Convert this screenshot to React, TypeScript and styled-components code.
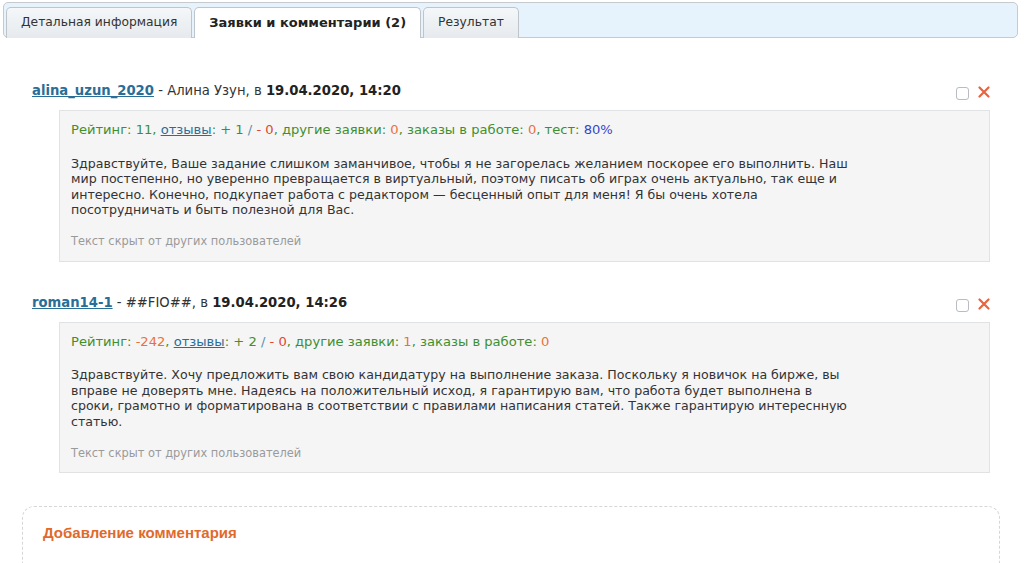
import React from "react";
import styled, { createGlobalStyle } from "styled-components";

const GlobalStyle = createGlobalStyle`
  html, body {
    margin: 0;
    padding: 0;
    background: #ffffff;
  }
  body {
    font-family: "DejaVu Sans", Verdana, sans-serif;
    font-size: 13px;
    color: #333333;
  }
`;

const Page = styled.div`
  width: 1024px;
  padding-top: 2px;
`;

const TabBar = styled.nav`
  display: flex;
  align-items: flex-end;
  gap: 2px;
  height: 34px;
  margin: 0 6px 0 3px;
  padding-left: 2px;
  background: #e7f3fc;
  border: 1px solid #c6cacf;
  border-radius: 5px;
`;

const Tab = styled.div<{ $active?: boolean }>`
  display: flex;
  align-items: center;
  flex: none;
  height: 31px;
  padding: 0 14px 2px;
  margin-bottom: -1px;
  box-sizing: border-box;
  border: 1px solid #bfc4c9;
  border-bottom: none;
  border-radius: 5px 5px 0 0;
  background: ${(p) =>
    p.$active ? "#ffffff" : "linear-gradient(#f5f7f9, #e6eaee)"};
  color: ${(p) => (p.$active ? "#222222" : "#333333")};
  font-weight: ${(p) => (p.$active ? "bold" : "normal")};
  font-size: ${(p) => (p.$active ? "13px" : "12.3px")};
`;

const List = styled.section`
  padding: 45px 34px 0 32px;
`;

const Comment = styled.article`
  & + & {
    margin-top: 33px;
  }
`;

const Header = styled.header`
  display: flex;
  align-items: center;
  height: 16px;
  line-height: 16px;
  font-size: 13.2px;
`;

const UserLink = styled.a`
  color: #2a6d96;
  font-weight: bold;
  text-decoration: underline;
`;

const Bold = styled.b`
  color: #222222;
`;

const Actions = styled.div`
  display: flex;
  align-items: center;
  gap: 9px;
  margin-left: auto;
  padding-top: 2px;
`;

const Check = styled.span`
  display: inline-block;
  width: 11px;
  height: 11px;
  margin-top: 3px;
  border: 1px solid #b9bcc0;
  border-radius: 3px;
  background: #ffffff;
`;

const Box = styled.div`
  margin: 11px 0 0 27px;
  padding: 11px 11px 11px;
  background: #f5f5f6;
  border: 1px solid #e1e2e4;
  line-height: 15.6px;
`;

const Stats = styled.div`
  color: #3f8f2f;
  font-size: 13.1px;
`;

const Tone = styled.span<{ $c: string }>`
  color: ${(p) => p.$c};
`;

const StatLink = styled.a`
  color: #2a6d96;
  text-decoration: underline;
`;

const Body = styled.p`
  margin: 18px 0 0;
  color: #333333;
  font-size: 12.6px;
`;

const Hidden = styled.div`
  margin-top: 16px;
  color: #9a9a9a;
  font-size: 11.4px;
`;

const AddBox = styled.section`
  margin: 33px 24px 0 22px;
  height: 40px;
  padding: 17px 20px 0;
  border: 1px dashed #d6d6d6;
  border-bottom: none;
  border-radius: 12px 12px 0 0;
`;

const AddTitle = styled.h3`
  margin: 0;
  color: #e06a2c;
  font-family: "Liberation Sans", Arial, sans-serif;
  font-size: 15px;
  line-height: 18px;
  font-weight: bold;
`;

const GREEN = "#3f8f2f";
const ORANGE = "#e8713a";
const RED = "#e0452d";
const BLUE = "#3a44c8";
const SLASH = "#5a8fb0";

const CloseIcon = () => (
  <svg width="12" height="12" viewBox="0 0 12 12">
    <path
      d="M1.5 1.5 L10.5 10.5 M10.5 1.5 L1.5 10.5"
      stroke="#e8633e"
      strokeWidth="2.2"
      strokeLinecap="round"
    />
  </svg>
);

type Stat = {
  rating: string;
  ratingColor: string;
  plus: string;
  other: string;
  otherColor: string;
  work: string;
  test?: string;
};

type Item = {
  login: string;
  name: string;
  date: string;
  stat: Stat;
  lines: string[];
};

const items: Item[] = [
  {
    login: "alina_uzun_2020",
    name: "Алина Узун",
    date: "19.04.2020, 14:20",
    stat: {
      rating: "11",
      ratingColor: GREEN,
      plus: "1",
      other: "0",
      otherColor: ORANGE,
      work: "0",
      test: "80%",
    },
    lines: [
      "Здравствуйте, Ваше задание слишком заманчивое, чтобы я не загорелась желанием поскорее его выполнить. Наш",
      "мир постепенно, но уверенно превращается в виртуальный, поэтому писать об играх очень актуально, так еще и",
      "интересно. Конечно, подкупает работа с редактором — бесценный опыт для меня! Я бы очень хотела",
      "посотрудничать и быть полезной для Вас.",
    ],
  },
  {
    login: "roman14-1",
    name: "##FIO##",
    date: "19.04.2020, 14:26",
    stat: {
      rating: "-242",
      ratingColor: ORANGE,
      plus: "2",
      other: "1",
      otherColor: ORANGE,
      work: "0",
    },
    lines: [
      "Здравствуйте. Хочу предложить вам свою кандидатуру на выполнение заказа. Поскольку я новичок на бирже, вы",
      "вправе не доверять мне. Надеясь на положительный исход, я гарантирую вам, что работа будет выполнена в",
      "сроки, грамотно и форматирована в соответствии с правилами написания статей. Также гарантирую интереснную",
      "статью.",
    ],
  },
];

const StatsLine: React.FC<{ s: Stat }> = ({ s }) => (
  <Stats>
    Рейтинг: <Tone $c={s.ratingColor}>{s.rating}</Tone>, <StatLink>отзывы</StatLink>: + {s.plus}{" "}
    <Tone $c={SLASH}>/</Tone> <Tone $c={RED}>- 0</Tone>, другие заявки:{" "}
    <Tone $c={s.otherColor}>{s.other}</Tone>, заказы в работе: <Tone $c={ORANGE}>{s.work}</Tone>
    {s.test && (
      <>
        , тест: <Tone $c={BLUE}>{s.test}</Tone>
      </>
    )}
  </Stats>
);

const App: React.FC = () => (
  <>
    <GlobalStyle />
    <Page>
      <TabBar>
        <Tab>Детальная информация</Tab>
        <Tab $active>Заявки и комментарии (2)</Tab>
        <Tab>Результат</Tab>
      </TabBar>
      <List>
        {items.map((it) => (
          <Comment key={it.login}>
            <Header>
              <span>
                <UserLink>{it.login}</UserLink> - {it.name}, в <Bold>{it.date}</Bold>
              </span>
              <Actions>
                <Check />
                <CloseIcon />
              </Actions>
            </Header>
            <Box>
              <StatsLine s={it.stat} />
              <Body>
                {it.lines.map((l, i) => (
                  <React.Fragment key={i}>
                    {l}
                    {i < it.lines.length - 1 && <br />}
                  </React.Fragment>
                ))}
              </Body>
              <Hidden>Текст скрыт от других пользователей</Hidden>
            </Box>
          </Comment>
        ))}
      </List>
      <AddBox>
        <AddTitle>Добавление комментария</AddTitle>
      </AddBox>
    </Page>
  </>
);

export default App;
